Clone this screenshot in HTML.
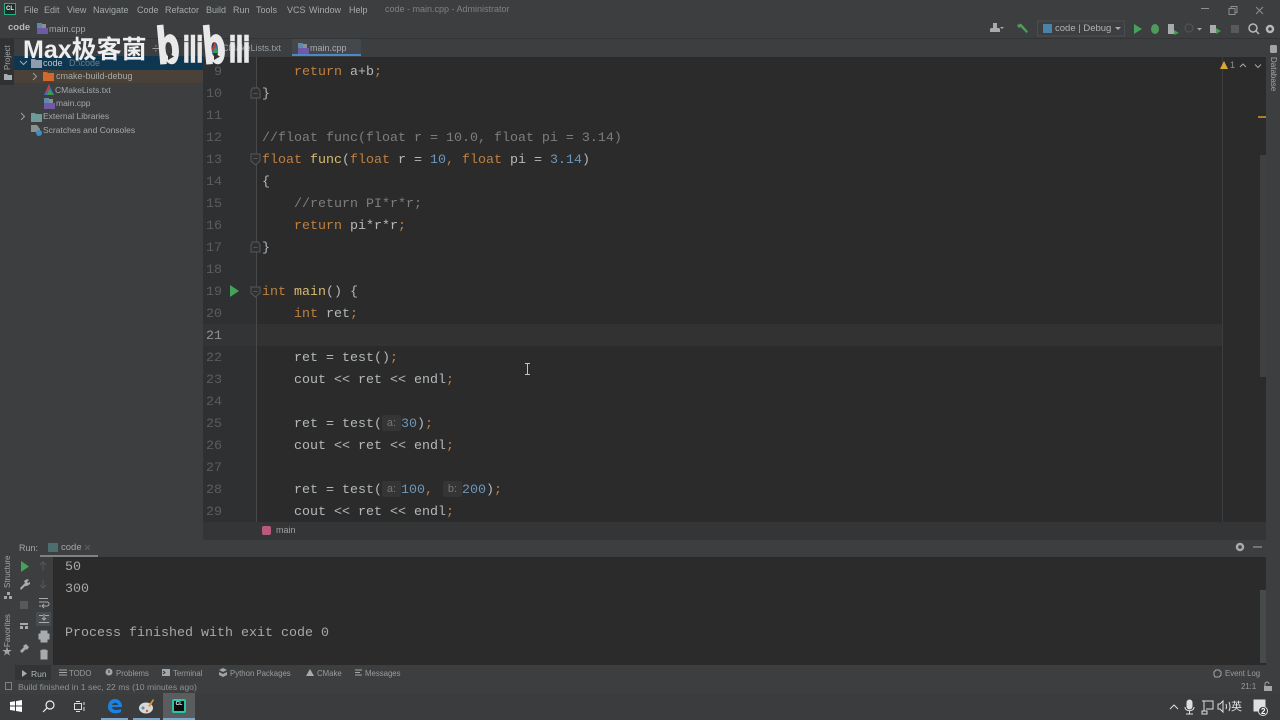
<!DOCTYPE html>
<html lang="en"><head><meta charset="utf-8"><title>code - main.cpp</title>
<style>
html,body{margin:0;padding:0;width:1280px;height:720px;overflow:hidden;background:#3c3e3f}
body{position:relative;font-family:"Liberation Sans","Noto Sans CJK SC",sans-serif;font-size:9px;color:#a9adaf;filter:blur(.35px)}
.a{position:absolute}
.t{position:absolute;white-space:pre;line-height:14px}
.code{position:absolute;left:262px;font:13.33px/22px "Liberation Mono",monospace;color:#b4b8bb;white-space:pre;height:22px}
.n{position:absolute;left:204px;width:18px;text-align:right;font:13.33px/22px "Liberation Mono",monospace;color:#5a5d5f;white-space:pre}
.k{color:#c0803f}.f{color:#d8bb70}.v{color:#6c97ba}.c{color:#7b7e80}.s{color:#c0803f}
.h{display:inline-block;background:#353535;color:#777;font:11px/16px "Liberation Sans",sans-serif;padding:0 3px;margin:0;border-radius:2px;vertical-align:1px;width:13px;text-align:center;box-sizing:content-box}
.m{font-size:9px;color:#a6aaac}
.tab{font-size:7.8px;color:#9a9ea0}
.tr{font-size:8.5px;color:#a6aaac}
svg{position:absolute;overflow:visible}
.vt{position:absolute;transform-origin:0 0;transform:rotate(-90deg);white-space:pre;font-size:8px;line-height:10px;color:#a3a6a8}
</style></head><body>

<!-- title bar -->
<div class="a" style="left:0;top:0;width:1280px;height:38px;background:#3c3e3f"></div>
<div class="a" style="left:4px;top:3px;width:12px;height:12px;background:#1f2b2a;border:1px solid #23b07f;box-sizing:border-box;color:#eee;font:bold 6px/10px 'Liberation Sans';text-align:center">CL</div>
<div class="t m" style="left:24px;top:3px">File</div>
<div class="t m" style="left:44px;top:3px">Edit</div>
<div class="t m" style="left:67px;top:3px">View</div>
<div class="t m" style="left:93px;top:3px">Navigate</div>
<div class="t m" style="left:137px;top:3px">Code</div>
<div class="t m" style="left:165px;top:3px">Refactor</div>
<div class="t m" style="left:206px;top:3px">Build</div>
<div class="t m" style="left:233px;top:3px">Run</div>
<div class="t m" style="left:256px;top:3px">Tools</div>
<div class="t m" style="left:287px;top:3px">VCS</div>
<div class="t m" style="left:309px;top:3px">Window</div>
<div class="t m" style="left:349px;top:3px">Help</div>
<div class="t" style="left:385px;top:2px;color:#7f8385;font-size:9px">code - main.cpp - Administrator</div>
<svg style="left:1195px;top:4px" width="85" height="12" fill="none" stroke="#8d9092">
<path d="M6 4.500h8"/><path d="M34 4.500h6v6h-6zM36 4.500v-2h6v6h-2"/><path d="M61 3l7 7M68 3l-7 7"/></svg>

<!-- nav bar -->
<div class="a" style="left:0;top:38px;width:1280px;height:1px;background:#323435"></div>
<div class="t" style="left:8px;top:21px;color:#b6babc;font-size:9.5px;font-weight:bold">code</div>
<svg style="left:37px;top:23px" width="11" height="11"><rect x="0" y="0" width="5" height="5" fill="#5e89ab"/><rect x="5" y="1" width="4" height="4" fill="#8c8f91"/><rect x="0" y="5" width="11" height="6" fill="#6f5aa6"/></svg>
<div class="t" style="left:49px;top:22px;color:#a4a8aa;font-size:9px">main.cpp</div>

<!-- toolbar right -->
<svg style="left:988px;top:22px" width="292" height="14">
<path d="M5 1h4v5h2l1 1v3H2V7l1-1h2z" fill="#a8abad"/><path d="M12 5h4l-2 2z" fill="#a8abad"/>
<path d="M29 3l4-1.500 7 8-1.500 1.500-6-6-2 1z" fill="#4f9a5a"/>
<rect x="49.500" y="-1" width="87" height="15" fill="none" stroke="#4b4e50"/>
<rect x="55" y="2" width="9" height="9" fill="#4a83a8"/>
<path d="M127 5h6l-3 3z" fill="#a8abad"/>
<path d="M146 2l8 5-8 5z" fill="#43a35a"/>
<ellipse cx="167" cy="7" rx="4" ry="5" fill="#4f9a5a"/>
<rect x="180" y="2" width="6" height="10" fill="#a8abad"/><path d="M186 8l5 3-5 2z" fill="#4a9a58"/>
<circle cx="201" cy="6" r="4" fill="none" stroke="#55585a"/>
<path d="M209 6h5l-2.500 2.500z" fill="#a8abad"/>
<rect x="222" y="3" width="6" height="8" fill="#a8abad"/><path d="M228 6l5 3-5 3z" fill="#4a9a58"/>
<rect x="243" y="3" width="8" height="8" fill="#58595a"/>
<circle cx="265" cy="6" r="4" fill="none" stroke="#b5b8ba" stroke-width="1.500"/><path d="M268 9l3 3" stroke="#b5b8ba" stroke-width="1.500"/>
<circle cx="282" cy="7" r="3" fill="none" stroke="#b5b8ba" stroke-width="2.500"/>
</svg>
<div class="t" style="left:1055px;top:22px;color:#b0b4b6;font-size:9.500px">code | Debug</div>

<!-- left strip & project panel -->
<div class="a" style="left:0;top:39px;width:14px;height:46px;background:#2f3132"></div>
<div class="vt" style="left:3px;top:70px">Project</div>
<svg style="left:4px;top:73px" width="8" height="8"><path d="M0 1h3l1 1h4v5H0z" fill="#a9acae"/></svg>
<div class="a" style="left:14px;top:39px;width:189px;height:17px;background:#3c3e3f"></div>
<div class="a" style="left:14px;top:56px;width:189px;height:14px;background:#0e3650"></div>
<div class="a" style="left:14px;top:70px;width:189px;height:13px;background:#4a4238"></div>
<svg style="left:20px;top:60px" width="8" height="6" fill="none" stroke="#a9adaf"><path d="M0 1l3.500 3.500L7 1"/></svg>
<svg style="left:31px;top:59px" width="11" height="9"><path d="M0 0h4l1 1h6v8H0z" fill="#8f9cab"/></svg>
<div class="t" style="left:43px;top:56px;color:#c0c4c6;font-size:9px">code</div>
<div class="t" style="left:69px;top:56px;color:#6b7d8a;font-size:9px">D:\code</div>
<svg style="left:32px;top:73px" width="6" height="8" fill="none" stroke="#9a9ea0"><path d="M1 0l3.500 3.500L1 7"/></svg>
<svg style="left:43px;top:72px" width="11" height="9"><path d="M0 0h4l1 1h6v8H0z" fill="#d1692c"/></svg>
<div class="t" style="left:56px;top:69px;color:#a5a8a8;font-size:9px">cmake-build-debug</div>
<svg style="left:44px;top:84px" width="10" height="11"><path d="M5 0L10 11H0z" fill="#2f6fc4"/><path d="M5 5L10 11H3z" fill="#3c9b4d"/><path d="M0 11L5 0l1 5z" fill="#c33c3c"/></svg>
<div class="t tr" style="left:55px;top:83px">CMakeLists.txt</div>
<svg style="left:44px;top:98px" width="11" height="11"><rect x="0" y="0" width="5" height="5" fill="#5e89ab"/><rect x="5" y="1" width="4" height="4" fill="#8c8f91"/><rect x="0" y="5" width="11" height="6" fill="#6f5aa6"/></svg>
<div class="t tr" style="left:56px;top:96px">main.cpp</div>
<svg style="left:20px;top:113px" width="6" height="8" fill="none" stroke="#9a9ea0"><path d="M1 0l3.500 3.500L1 7"/></svg>
<svg style="left:31px;top:112px" width="11" height="10"><path d="M0 1h4l1 1h6v8H0z" fill="#6f9a9a"/></svg>
<div class="t tr" style="left:43px;top:109px">External Libraries</div>
<svg style="left:31px;top:125px" width="11" height="11"><path d="M0 0h6l3 4v3H0z" fill="#8d9092"/><circle cx="8" cy="8" r="3" fill="#3d8fc4"/></svg>
<div class="t tr" style="left:43px;top:123px">Scratches and Consoles</div>

<!-- tabs -->
<div class="a" style="left:203px;top:39px;width:1063px;height:18px;background:#3c3e3f"></div>
<div class="a" style="left:292px;top:39px;width:69px;height:17px;background:#45484a"></div>
<div class="a" style="left:292px;top:54px;width:69px;height:2px;background:#4a88c7"></div>
<svg style="left:298px;top:43px" width="11" height="11"><rect x="0" y="0" width="5" height="5" fill="#5e89ab"/><rect x="5" y="1" width="4" height="4" fill="#8c8f91"/><rect x="0" y="5" width="11" height="6" fill="#6f5aa6"/></svg>
<div class="t" style="left:310px;top:41px;font-size:9px;color:#a9adaf">main.cpp</div>
<div class="t" style="left:222px;top:41px;font-size:9px;color:#9a9ea0">CMakeLists.txt</div>
<svg style="left:210px;top:42px" width="10" height="11"><path d="M5 0L10 11H0z" fill="#2f6fc4"/><path d="M5 5L10 11H3z" fill="#3c9b4d"/><path d="M0 11L5 0l1 5z" fill="#c33c3c"/></svg>

<!-- editor -->
<div class="a" style="left:203px;top:57px;width:1063px;height:465px;background:#2b2b2b"></div>
<div class="a" style="left:203px;top:57px;width:53px;height:465px;background:#2f3031"></div>
<div class="a" style="left:256px;top:57px;width:1px;height:465px;background:#47494a"></div>
<div class="a" style="left:257px;top:324px;width:965px;height:22px;background:#323232"></div>
<div class="a" style="left:203px;top:324px;width:53px;height:22px;background:#333435"></div>
<div class="a" style="left:1222px;top:57px;width:1px;height:465px;background:#3c3d3e"></div>
<div class="a" style="left:1260px;top:155px;width:6px;height:222px;background:#3e4042"></div>
<div class="a" style="left:1258px;top:116px;width:8px;height:2px;background:#a87f2c"></div>

<div class="n" style="top:62px">9</div><div class="code" style="top:62px">    <span class="k">return</span> a+b<span class="s">;</span></div>
<div class="n" style="top:84px">10</div><div class="code" style="top:84px">}</div>
<div class="n" style="top:106px">11</div>
<div class="n" style="top:128px">12</div><div class="code c" style="top:128px">//float func(float r = 10.0, float pi = 3.14)</div>
<div class="n" style="top:150px">13</div><div class="code" style="top:150px"><span class="k">float</span> <span class="f">func</span>(<span class="k">float</span> r = <span class="v">10</span><span class="s">,</span> <span class="k">float</span> pi = <span class="v">3.14</span>)</div>
<div class="n" style="top:172px">14</div><div class="code" style="top:172px">{</div>
<div class="n" style="top:194px">15</div><div class="code c" style="top:194px">    //return PI*r*r;</div>
<div class="n" style="top:216px">16</div><div class="code" style="top:216px">    <span class="k">return</span> pi*r*r<span class="s">;</span></div>
<div class="n" style="top:238px">17</div><div class="code" style="top:238px">}</div>
<div class="n" style="top:260px">18</div>
<div class="n" style="top:282px">19</div><div class="code" style="top:282px"><span class="k">int</span> <span class="f">main</span>() {</div>
<div class="n" style="top:304px">20</div><div class="code" style="top:304px">    <span class="k">int</span> ret<span class="s">;</span></div>
<div class="n" style="top:326px;color:#8f9294">21</div>
<div class="n" style="top:348px">22</div><div class="code" style="top:348px">    ret = test()<span class="s">;</span></div>
<div class="n" style="top:370px">23</div><div class="code" style="top:370px">    cout &lt;&lt; ret &lt;&lt; endl<span class="s">;</span></div>
<div class="n" style="top:392px">24</div>
<div class="n" style="top:414px">25</div><div class="code" style="top:414px">    ret = test(<span class="h">a:</span><span class="v">30</span>)<span class="s">;</span></div>
<div class="n" style="top:436px">26</div><div class="code" style="top:436px">    cout &lt;&lt; ret &lt;&lt; endl<span class="s">;</span></div>
<div class="n" style="top:458px">27</div>
<div class="n" style="top:480px">28</div><div class="code" style="top:480px">    ret = test(<span class="h">a:</span><span class="v">100</span><span class="s">,</span> <span class="h" style="margin-left:2px">b:</span><span class="v">200</span>)<span class="s">;</span></div>
<div class="n" style="top:502px">29</div><div class="code" style="top:502px;height:20px;overflow:hidden">    cout &lt;&lt; ret &lt;&lt; endl<span class="s">;</span></div>

<!-- fold markers -->
<svg style="left:250px;top:57px" width="11" height="465" fill="none" stroke="#555759">
<path d="M1 41h9v-7l-1.500-3h-6L1 34z" fill="#2f3031"/><path d="M3.500 36.500h4"/>
<path d="M1 97h9v7l-4.500 4-4.500-4z" fill="#2f3031"/><path d="M3.500 101.500h4"/>
<path d="M1 195h9v-7l-1.500-3h-6L1 188z" fill="#2f3031"/><path d="M3.500 190.500h4"/>
<path d="M1 230h9v6l-4.500 4-4.500-4z" fill="#2f3031"/><path d="M3.500 234.500h4"/>
</svg>
<svg style="left:230px;top:285px" width="10" height="12"><path d="M0 0l9 6-9 6z" fill="#43a35a"/></svg>
<!-- I-beam cursor -->
<svg style="left:524px;top:363px" width="7" height="12" fill="none" stroke="#c4c4c4"><path d="M1 .5h5M3.500 .5v11M1 11.500h5"/></svg>

<!-- warning marker -->
<svg style="left:1220px;top:61px" width="45" height="10" fill="none" stroke="#a3a6a8"><path d="M4 0l4 8H0z" fill="#d8a833" stroke="none"/><path d="M20 6l3-3 3 3"/><path d="M35 3.500l3 3 3-3"/></svg>
<div class="t" style="left:1230px;top:58px;color:#8f9294;font-size:9px">1</div>

<!-- right strip -->
<div class="a" style="left:1266px;top:39px;width:14px;height:654px;background:#3c3e3f"></div>
<svg style="left:1270px;top:45px" width="7" height="8"><rect width="7" height="8" rx="1.500" fill="#a3a6a8"/></svg>
<div class="a" style="left:1268px;top:57px;writing-mode:vertical-rl;font-size:8px;line-height:10px;color:#a3a6a8;white-space:pre">Database</div>

<!-- breadcrumb -->
<div class="a" style="left:203px;top:522px;width:1063px;height:18px;background:#333536"></div>
<div class="a" style="left:262px;top:526px;width:9px;height:9px;border-radius:2px;background:#b95a7c"></div>
<div class="t" style="left:276px;top:523px;color:#9ea2a4;font-size:9px">main</div>

<!-- left panel bottom -->
<div class="a" style="left:14px;top:136px;width:189px;height:404px;background:#3c3e3f"></div>

<!-- run panel -->
<div class="a" style="left:0;top:540px;width:1266px;height:17px;background:#3c3e3f"></div>
<div class="t" style="left:19px;top:541px;color:#a3a7a9;font-size:9px">Run:</div>
<div class="a" style="left:40px;top:555px;width:58px;height:2px;background:#7f8284"></div>
<svg style="left:48px;top:542px" width="11" height="11"><rect width="10" height="9" y="1" fill="#4c6e70"/></svg>
<div class="t" style="left:61px;top:541px;color:#a3a7a9;font-size:9.500px">code</div>
<svg style="left:85px;top:545px" width="6" height="6" stroke="#5e6163"><path d="M0 0l5 5M5 0l-5 5"/></svg>
<svg style="left:1234px;top:541px" width="32" height="12" fill="none" stroke="#a8abad"><circle cx="6" cy="6" r="3" stroke-width="2.500"/><path d="M19 6h9"/></svg>
<div class="a" style="left:53px;top:557px;width:1213px;height:108px;background:#2b2b2b"></div>
<div class="a" style="left:1260px;top:590px;width:6px;height:73px;background:#474a4b"></div>
<div class="a" style="left:14px;top:557px;width:39px;height:108px;background:#3c3e3f"></div>
<div class="a" style="left:0;top:557px;width:14px;height:108px;background:#3c3e3f"></div>
<div class="code" style="left:65px;top:557px;color:#a5a9a9">50</div>
<div class="code" style="left:65px;top:579px;color:#a5a9a9">300</div>
<div class="code" style="left:65px;top:623px;color:#a5a9a9">Process finished with exit code 0</div>

<div class="vt" style="left:3px;top:588px">Structure</div>
<svg style="left:4px;top:592px" width="8" height="8"><path d="M3 0h3v3H3zM0 4h3v3H0zM5 4h3v3H5z" fill="#a3a6a8"/></svg>
<div class="vt" style="left:3px;top:647px">Favorites</div>
<div class="t" style="left:2px;top:646px;color:#a3a6a8;font-size:10px">★</div>

<svg style="left:18px;top:560px" width="34" height="102">
<path d="M3 1l8 5.500-8 5.500z" fill="#43a35a"/>
<path d="M2 28l5-5-1-2 3-2 2 1-2 2 1 1 2-1 0 2-3 2-2 0-4 4z" fill="#a8abad"/>
<rect x="2" y="41" width="8" height="8" fill="#58595a"/>
<path d="M2 63h8v2H2zM2 66h3v3H2zM7 66h3v3H7z" fill="#a8abad"/>
<path d="M2 91l4-4-1-1 3-2 3 3-2 3-1-1-4 4z" fill="#a8abad"/>
<path d="M25 2v9M22 5l3-3 3 3" fill="none" stroke="#555759"/>
<path d="M25 20v8M22 25l3 3 3-3" fill="none" stroke="#555759"/>
</svg>
<div class="a" style="left:36px;top:612px;width:15px;height:14px;background:#4a4d4f"></div>
<svg style="left:38px;top:597px" width="12" height="66" fill="none" stroke="#a8abad">
<path d="M1 1.500h9M1 5h8a2 2 0 010 4H5M1 9h2M6 7l-2 2 2 2"/>
<path d="M1 18.500h4M7 18.500h4M1 25.500h10M6 17v6M4 21l2 2 2-2"/>
<path d="M1 37h10v5H1z" fill="#a8abad"/><path d="M3 34h6v3H3zM3 42h6v3H3z" fill="#a8abad"/>
<path d="M2 54h8M4 54v-1h4v1M3 55h6v7H3z" fill="#a8abad"/>
</svg>

<!-- tool tabs -->
<div class="a" style="left:0;top:665px;width:1266px;height:15px;background:#3c3e3f"></div>
<div class="a" style="left:15px;top:665px;width:36px;height:15px;background:#323435"></div>
<svg style="left:22px;top:670px" width="6" height="7"><path d="M0 0l5 3.500L0 7z" fill="#a8abad"/></svg>
<div class="t" style="left:31px;top:667px;color:#b4b8ba;font-size:8.500px">Run</div>
<svg style="left:59px;top:669px" width="8" height="7" stroke="#a3a6a8"><path d="M0 1h8M0 3.500h8M0 6h8"/></svg>
<div class="t tab" style="left:69px;top:667px">TODO</div>
<svg style="left:105px;top:668px" width="8" height="8"><circle cx="4" cy="4" r="3.500" fill="#a3a6a8"/><rect x="3.500" y="2" width="1" height="3" fill="#333"/></svg>
<div class="t tab" style="left:116px;top:667px">Problems</div>
<svg style="left:162px;top:669px" width="8" height="7"><rect width="8" height="7" fill="#a3a6a8"/><path d="M1 2l2 1.500L1 5" fill="none" stroke="#333"/></svg>
<div class="t tab" style="left:173px;top:667px">Terminal</div>
<svg style="left:219px;top:668px" width="8" height="9"><path d="M4 0l4 2-4 2-4-2zM0 4l4 2 4-2v3l-4 2-4-2z" fill="#a3a6a8"/></svg>
<div class="t tab" style="left:230px;top:667px">Python Packages</div>
<svg style="left:306px;top:669px" width="8" height="7"><path d="M4 0l4 7H0z" fill="#a8abad"/></svg>
<div class="t tab" style="left:317px;top:667px">CMake</div>
<svg style="left:355px;top:669px" width="8" height="7" stroke="#a3a6a8"><path d="M0 1h7M0 3.500h5M0 6h7"/></svg>
<div class="t tab" style="left:365px;top:667px">Messages</div>
<svg style="left:1213px;top:669px" width="9" height="9" fill="none" stroke="#a3a6a8"><path d="M2 8l-1-2V3l2-2h3l2 2v3L6 8z"/></svg>
<div class="t tab" style="left:1225px;top:667px">Event Log</div>

<!-- status -->
<div class="a" style="left:0;top:680px;width:1280px;height:14px;background:#3c3e3f"></div>
<svg style="left:4px;top:682px" width="9" height="9" fill="none" stroke="#7f8284"><path d="M1.500 .5h6v7h-6z"/></svg>
<div class="t" style="left:18px;top:680px;color:#8f9395;font-size:8.650px">Build finished in 1 sec, 22 ms (10 minutes ago)</div>
<div class="t tab" style="left:1241px;top:680px">21:1</div>
<svg style="left:1264px;top:682px" width="9" height="9"><rect y="4" width="8" height="5" fill="#a3a6a8"/><path d="M1 4V2a2 2 0 014 0" fill="none" stroke="#a3a6a8"/></svg>

<!-- taskbar -->
<div class="a" style="left:0;top:694px;width:1280px;height:26px;background:#3a3c3d"></div>
<div class="a" style="left:163px;top:693px;width:32px;height:27px;background:#5a5c5d"></div>
<div class="a" style="left:101px;top:718px;width:27px;height:2px;background:#7ba7cf"></div>
<div class="a" style="left:133px;top:718px;width:27px;height:2px;background:#7ba7cf"></div>
<div class="a" style="left:163px;top:718px;width:32px;height:2px;background:#7ba7cf"></div>
<svg style="left:10px;top:700px" width="12" height="12"><path d="M0 2l5-.7V5.500H0zM6 1.100L12 0v5.500H6zM0 6.500h5v4.200L0 10zM6 6.500h6V12l-6-1z" fill="#fff"/></svg>
<svg style="left:42px;top:700px" width="13" height="13" fill="none" stroke="#eee" stroke-width="1.200"><circle cx="8" cy="5" r="4"/><path d="M5 8l-4 4"/></svg>
<svg style="left:74px;top:701px" width="12" height="11" fill="none" stroke="#ddd"><path d="M.5 2.500h7v6h-7zM2 .5h4M2 10.500h4M10 1v3M10 6v4"/></svg>
<svg style="left:107px;top:699px" width="15" height="15"><path d="M1 8C1 3 4 0 8 0c4 0 7 3 7 8H5c0 3 5 4 9 2v3c-5 3-13 1-13-5zM5 6h6c0-3-5-3-6 0z" fill="#1a82e2"/></svg>
<svg style="left:139px;top:699px" width="16" height="15"><ellipse cx="7" cy="9" rx="7" ry="5.500" fill="#d8d8d4"/><circle cx="4" cy="9" r="1.500" fill="#4a90c9"/><circle cx="8" cy="12" r="1.200" fill="#d15c4c"/><path d="M9 7l5-7 1 1-4 7z" fill="#d89a3c"/></svg>
<div class="a" style="left:172px;top:699px;width:14px;height:14px;background:#0c0c0c;border:2px solid #22c8a8;box-sizing:border-box;border-radius:2px;color:#fff;font:bold 5px/6px 'Liberation Sans';text-align:center">CL</div>
<svg style="left:1168px;top:698px" width="105" height="20" fill="none" stroke="#dfdfdf">
<path d="M2 11l4-4 4 4"/>
<rect x="19" y="2" width="5" height="9" rx="2.500" fill="#dfdfdf"/><path d="M17 9c0 5 9 5 9 0M21.500 13v3M18 16h7"/>
<path d="M34 3h11v8h-7M36 3v10M34 13h5v3h-5z"/>
<path d="M50 6h2l3-3v11l-3-3h-2zM58 6q1 2.500 0 5M61 4q2 4.500 0 9"/>
<path d="M86 2h11v11h-11zM88 5h7M88 8h7" fill="#dfdfdf"/>
<circle cx="95" cy="13" r="4.500" fill="#3a3c3d"/>
</svg>
<div class="t" style="left:1231px;top:699px;color:#e6e6e6;font-size:11px;font-family:'Noto Sans CJK SC',sans-serif">英</div>
<div class="t" style="left:1261px;top:705px;color:#fff;font-size:8px;font-weight:bold">2</div>

<!-- watermark -->
<div class="t" style="left:23px;top:37px;color:#eeeeee;font:bold 25px/26px 'Liberation Sans','Noto Sans CJK SC',sans-serif">Max极客菌</div>
<div class="t" style="left:152px;top:40px;color:#9a9c9d;font-size:14px;line-height:16px">÷</div>
<svg style="left:0;top:0" width="1280" height="720" font-family="'DejaVu Sans',sans-serif" font-weight="bold" fill="#e9e9e9" stroke="#e9e9e9">
<text x="158" y="63" textLength="23" lengthAdjust="spacingAndGlyphs" font-size="50" stroke-width="1.500" transform="rotate(-5 170 63)">b</text>
<path d="M168 53l0 7 6-3.500z" fill="#333" stroke="none"/>
<text x="183" y="62" textLength="20" lengthAdjust="spacingAndGlyphs" font-size="35" stroke-width="1.600">ili</text>
<text x="204" y="63" textLength="23" lengthAdjust="spacingAndGlyphs" font-size="50" stroke-width="1.500" transform="rotate(-5 216 63)">b</text>
<path d="M214 53l0 7 6-3.500z" fill="#333" stroke="none"/>
<text x="229" y="62" textLength="21" lengthAdjust="spacingAndGlyphs" font-size="35" stroke-width="1.600">ili</text>
</svg>
</body></html>
